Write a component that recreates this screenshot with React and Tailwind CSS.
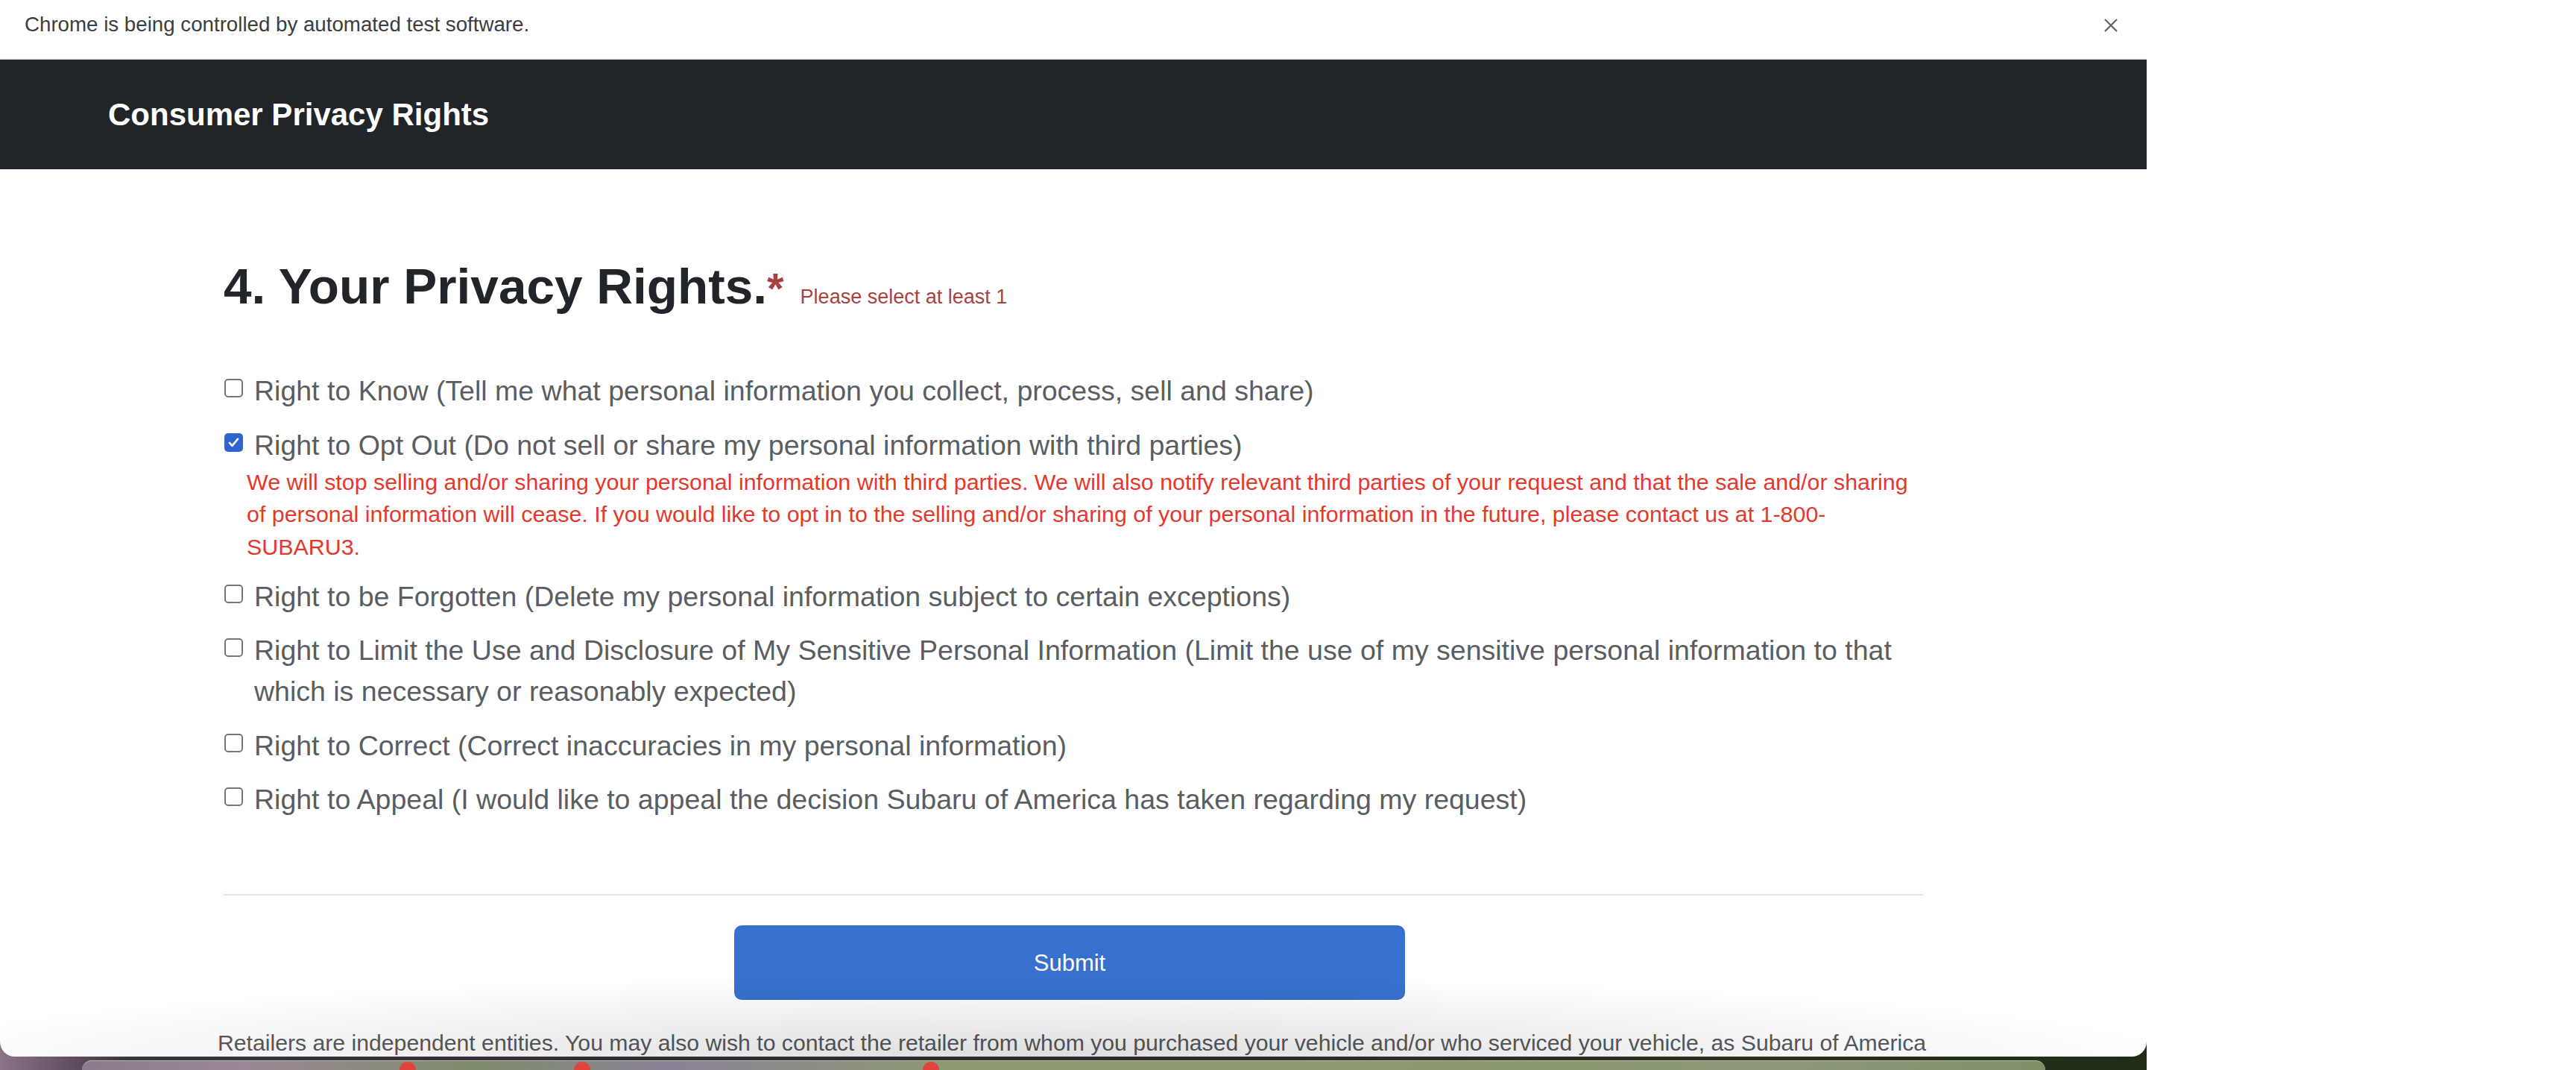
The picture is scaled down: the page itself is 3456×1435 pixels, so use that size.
import React from "react";

const items = [
  { label: "Right to Know (Tell me what personal information you collect, process, sell and share)" },
  {
    label: "Right to Opt Out (Do not sell or share my personal information with third parties)",
    checked: true,
    note: "We will stop selling and/or sharing your personal information with third parties. We will also notify relevant third parties of your request and that the sale and/or sharing of personal information will cease. If you would like to opt in to the selling and/or sharing of your personal information in the future, please contact us at 1-800-SUBARU3.",
  },
  { label: "Right to be Forgotten (Delete my personal information subject to certain exceptions)" },
  {
    label:
      "Right to Limit the Use and Disclosure of My Sensitive Personal Information (Limit the use of my sensitive personal information to that which is necessary or reasonably expected)",
  },
  { label: "Right to Correct (Correct inaccuracies in my personal information)" },
  { label: "Right to Appeal (I would like to appeal the decision Subaru of America has taken regarding my request)" },
];

function Box({ checked }) {
  if (checked) {
    return (
      <div className="w-[25px] h-[25px] mt-[11px] shrink-0 rounded-[5px] bg-[#2f63cf] flex items-center justify-center">
        <svg width="19" height="19" viewBox="0 0 24 24" fill="none">
          <path d="M5 12.5l4.5 5L19 6" stroke="white" strokeWidth="3.4" strokeLinecap="round" strokeLinejoin="round" />
        </svg>
      </div>
    );
  }
  return <div className="w-[25px] h-[25px] mt-[11px] shrink-0 rounded-[5px] border-[2px] border-[#767676] bg-white" />;
}

export default function App() {
  return (
    <div className="w-[3456px] h-[1435px] bg-white flex overflow-hidden font-['Liberation_Sans',Arial,sans-serif]">
      <div className="w-[2880px] h-[1435px] flex flex-col shrink-0 bg-[linear-gradient(90deg,#8c7388_0%,#3d3240_6%,#2f2a33_40%,#26301f_80%,#1f2d18_100%)]">
        <div className="h-[1417px] shrink-0 bg-white rounded-b-[20px] overflow-hidden relative flex flex-col">
          {/* infobar */}
          <div className="h-[79px] shrink-0 flex items-start justify-between pl-[33px] pr-[38px] pt-[19px]">
            <span className="text-[27.7px] leading-[28px] text-[#3b3d40]">Chrome is being controlled by automated test software.</span>
            <svg width="20" height="20" viewBox="0 0 20 20" className="mt-[5px]">
              <path d="M2 2L18 18M18 2L2 18" stroke="#5f6368" strokeWidth="2.2" />
            </svg>
          </div>
          {/* header */}
          <div className="h-[148px] shrink-0 bg-[#212529] border-t border-[#cfd2d6] flex items-center pl-[145px]">
            <h1 className="text-[42px] font-bold text-white leading-none">Consumer Privacy Rights</h1>
          </div>
          {/* content */}
          <div className="flex flex-col pl-[300px] w-[2580px]">
            <h2 className="mt-[117px] text-[67.5px] leading-[79px] font-bold text-[#212529] whitespace-nowrap">
              4. Your Privacy Rights.<span className="text-[58px] text-[#a9423f]">*</span>
              <span className="ml-[22px] text-[27px] font-normal text-[#a9423f]">Please select at least 1</span>
            </h2>
            <div className="mt-[59px] flex flex-col gap-[17.5px]">
              {items.map((it, i) => (
                <div key={i} className="flex flex-col">
                  <div className="flex items-start gap-[15px] pl-[1px]">
                    <Box checked={it.checked} />
                    <span className="text-[37.5px] leading-[55px] text-[#5a5d61]">{it.label}</span>
                  </div>
                  {it.note && (
                    <p className="ml-[31px] mr-[14px] text-[30.4px] leading-[43.5px] text-[#e6372d]">{it.note}</p>
                  )}
                </div>
              ))}
            </div>
            <div className="mt-[99px] h-[2px] bg-[#e3e3e3]" />
            <button className="mt-[40px] ml-[685px] w-[900px] h-[100px] rounded-[10px] bg-[#3770ce] text-white text-[31px] leading-none flex items-center justify-center">
              Submit
            </button>
            <p className="mt-[35px] -ml-[8px] w-[2310px] text-[30.2px] leading-[45px] text-[#57595c]">
              Retailers are independent entities. You may also wish to contact the retailer from whom you purchased your vehicle and/or who serviced your vehicle, as Subaru of America does not have access to the records kept by independent retailers.
            </p>
          </div>
          {/* dock shadow */}
          <div className="absolute left-0 right-0 bottom-0 h-[110px] pointer-events-none bg-[radial-gradient(1550px_110px_at_48%_100%,rgba(0,0,0,0.13),rgba(0,0,0,0))]" />
        </div>
        {/* wallpaper + dock */}
        <div className="flex-1 flex items-end pl-[110px] pr-[136px]">
          <div className="relative w-full h-[13px] rounded-t-[24px] border-t border-[#b4bca4] bg-[linear-gradient(90deg,#8a7c8c_0%,#9a8796_8%,#7f8c6c_20%,#8a8297_30%,#8d9a70_45%,#8e986f_60%,#8a9870_75%,#8c977a_88%,#7f9068_100%)]">
            <div className="absolute top-[1px] left-[426px] w-[22px] h-[22px] rounded-full bg-[#e0443a]" />
            <div className="absolute top-[1px] left-[660px] w-[22px] h-[22px] rounded-full bg-[#e0443a]" />
            <div className="absolute top-[1px] left-[1128px] w-[22px] h-[22px] rounded-full bg-[#e0443a]" />
          </div>
        </div>
      </div>
      <div className="flex-1 bg-white" />
    </div>
  );
}
